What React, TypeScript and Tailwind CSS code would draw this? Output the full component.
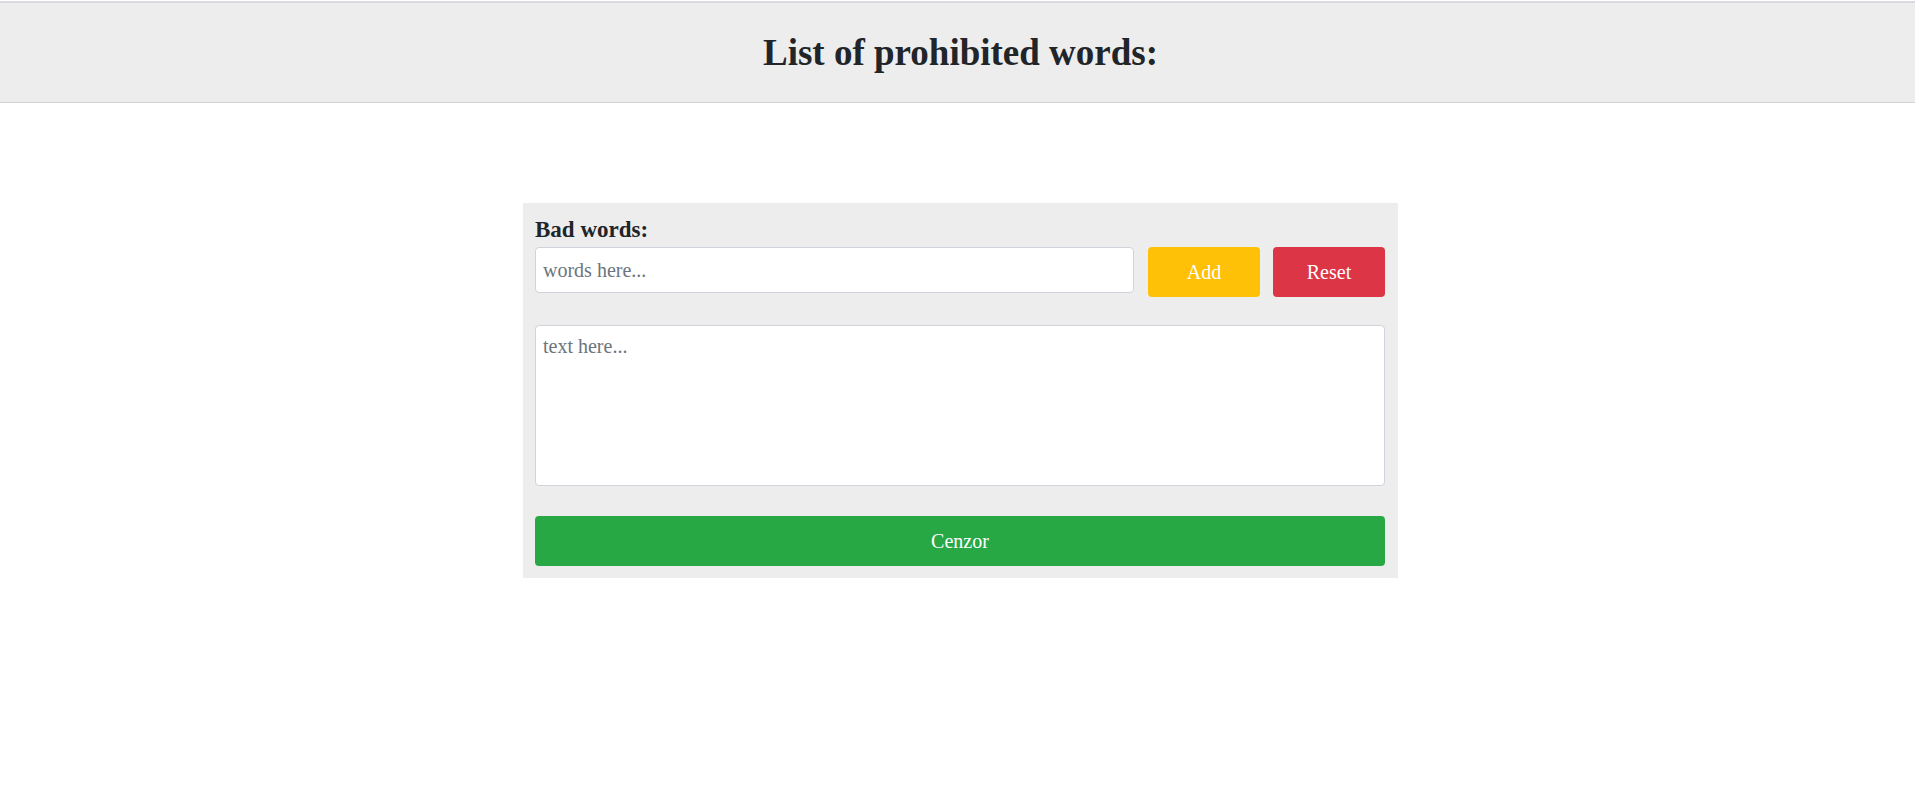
export default function App() {
  return (
    <div className="min-h-screen bg-white pt-px text-[#212529]" style={{ fontFamily: '"Liberation Serif", "DejaVu Serif", serif' }}>
      <header className="border-t-2 border-b border-t-[#dcdae0] border-b-[#d3d3d3] bg-[#ededed]">
        <div className="flex h-[99px] items-center justify-center pl-[6px]">
          <h1 className="text-[37px] font-bold leading-none">List of prohibited words:</h1>
        </div>
      </header>

      <main className="ml-[523px] mt-[100px] w-[875px] bg-[#ededed] px-3 pb-3 pt-3">
        <label className="block text-[23px] font-bold leading-[30px]">Bad words:</label>
        <div className="mt-[2px] flex items-start">
          <input
            type="text"
            placeholder="words here..."
            className="h-[46px] w-[599px] rounded-[4px] border border-[#ced4da] bg-white px-[7px] text-[20px] text-[#495057] placeholder:text-[#6c757d] outline-none"
          />
          <button className="ml-[14px] h-[50px] w-[112px] rounded-[4px] bg-[#ffc107] text-[20px] text-white">
            Add
          </button>
          <button className="ml-[13px] h-[50px] w-[112px] rounded-[4px] bg-[#dc3545] text-[20px] text-white">
            Reset
          </button>
        </div>

        <textarea
          placeholder="text here..."
          className="mt-[28px] block h-[161px] w-[850px] resize-none rounded-[4px] border border-[#ced4da] bg-white px-[7px] py-[5px] text-[20px] text-[#495057] placeholder:text-[#6c757d] outline-none"
        />

        <button className="mt-[30px] block h-[50px] w-[850px] rounded-[4px] bg-[#28a745] text-[20px] text-white">
          Cenzor
        </button>
      </main>
    </div>
  )
}
